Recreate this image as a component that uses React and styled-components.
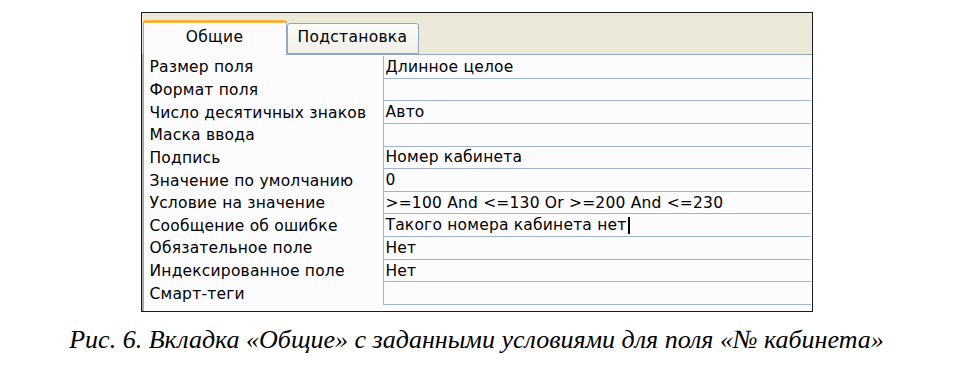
import styled, { createGlobalStyle } from "styled-components";

const GlobalStyle = createGlobalStyle`
  html, body {
    margin: 0;
    padding: 0;
    background: #ffffff;
  }
`;

const rows = [
  ["Размер поля", "Длинное целое"],
  ["Формат поля", ""],
  ["Число десятичных знаков", "Авто"],
  ["Маска ввода", ""],
  ["Подпись", "Номер кабинета"],
  ["Значение по умолчанию", "0"],
  ["Условие на значение", ">=100 And <=130 Or >=200 And <=230"],
  ["Сообщение об ошибке", "Такого номера кабинета нет", true],
  ["Обязательное поле", "Нет"],
  ["Индексированное поле", "Нет"],
  ["Смарт-теги", ""],
];

function App() {
  return (
    <Page>
      <GlobalStyle />
      <Frame>
        <TabStrip>
          <Tab $active>Общие</Tab>
          <Tab>Подстановка</Tab>
        </TabStrip>
        <Sheet>
          {rows.map(([label, value, caret]) => (
            <Row key={label}>
              <Label>{label}</Label>
              <Value>
                {value}
                {caret && <Caret />}
              </Value>
            </Row>
          ))}
        </Sheet>
      </Frame>
      <Caption>
        Рис. 6. Вкладка «Общие» с заданными условиями для поля «№ кабинета»
      </Caption>
    </Page>
  );
}

const Page = styled.div`
  width: 953px;
  padding-top: 12px;
  display: flex;
  flex-direction: column;
  align-items: center;
`;

const Frame = styled.div`
  width: 670px;
  height: 298px;
  border: 1px solid #1c1c1c;
  background: #ece9d8;
  display: flex;
  flex-direction: column;
`;

const TabStrip = styled.div`
  height: 41px;
  flex-shrink: 0;
  display: flex;
  align-items: flex-end;
  padding-left: 1px;
  border-bottom: 1px solid #91a7c4;
`;

const Tab = styled.div`
  box-sizing: border-box;
  height: ${(p) => (p.$active ? "35px" : "31px")};
  margin-bottom: ${(p) => (p.$active ? "-1px" : "0")};
  width: ${(p) => (p.$active ? "144px" : "132px")};
  padding: ${(p) => (p.$active ? "5px 0 0" : "4px 0 0 10px")};
  text-align: ${(p) => (p.$active ? "center" : "left")};
  background: ${(p) =>
    p.$active ? "#fcfcfe" : "linear-gradient(#fbfbf9, #f0efe8)"};
  border: 1px solid #91a7c4;
  border-top: ${(p) => (p.$active ? "3px solid #f7b23b" : "1px solid #91a7c4")};
  border-bottom: ${(p) => (p.$active ? "none" : "1px solid #91a7c4")};
  border-radius: 3px 3px 0 0;
  font-family: "DejaVu Sans", Verdana, sans-serif;
  font-size: 15.5px;
  letter-spacing: 0.3px;
  color: #000;
  z-index: ${(p) => (p.$active ? 1 : 0)};
`;

const Sheet = styled.div`
  flex: 1;
  background: #fcfcfe;
  border-left: 2px solid #a8a8a8;
  padding-top: 1px;
  display: grid;
  grid-template-rows: repeat(11, 22.65px);
  align-content: start;
`;

const Row = styled.div`
  display: grid;
  grid-template-columns: 239px 1fr;
  font-family: "DejaVu Sans", Verdana, sans-serif;
  font-size: 15.5px;
  letter-spacing: 0.2px;
  color: #000;
`;

const Label = styled.div`
  display: flex;
  align-items: center;
  padding-left: 6px;
  white-space: nowrap;
`;

const Value = styled.div`
  display: flex;
  align-items: center;
  padding-left: 2px;
  margin-right: 1px;
  border-left: 1px solid #9fb4cf;
  border-bottom: 1px solid #9fb4cf;
  white-space: nowrap;
`;

const Caret = styled.span`
  display: inline-block;
  width: 2px;
  height: 17px;
  background: #000;
  margin-left: 1px;
`;

const Caption = styled.div`
  margin-top: 13px;
  font-family: "Liberation Serif", "Times New Roman", serif;
  font-style: italic;
  font-size: 26px;
  color: #000;
  white-space: nowrap;
`;

export default App;
